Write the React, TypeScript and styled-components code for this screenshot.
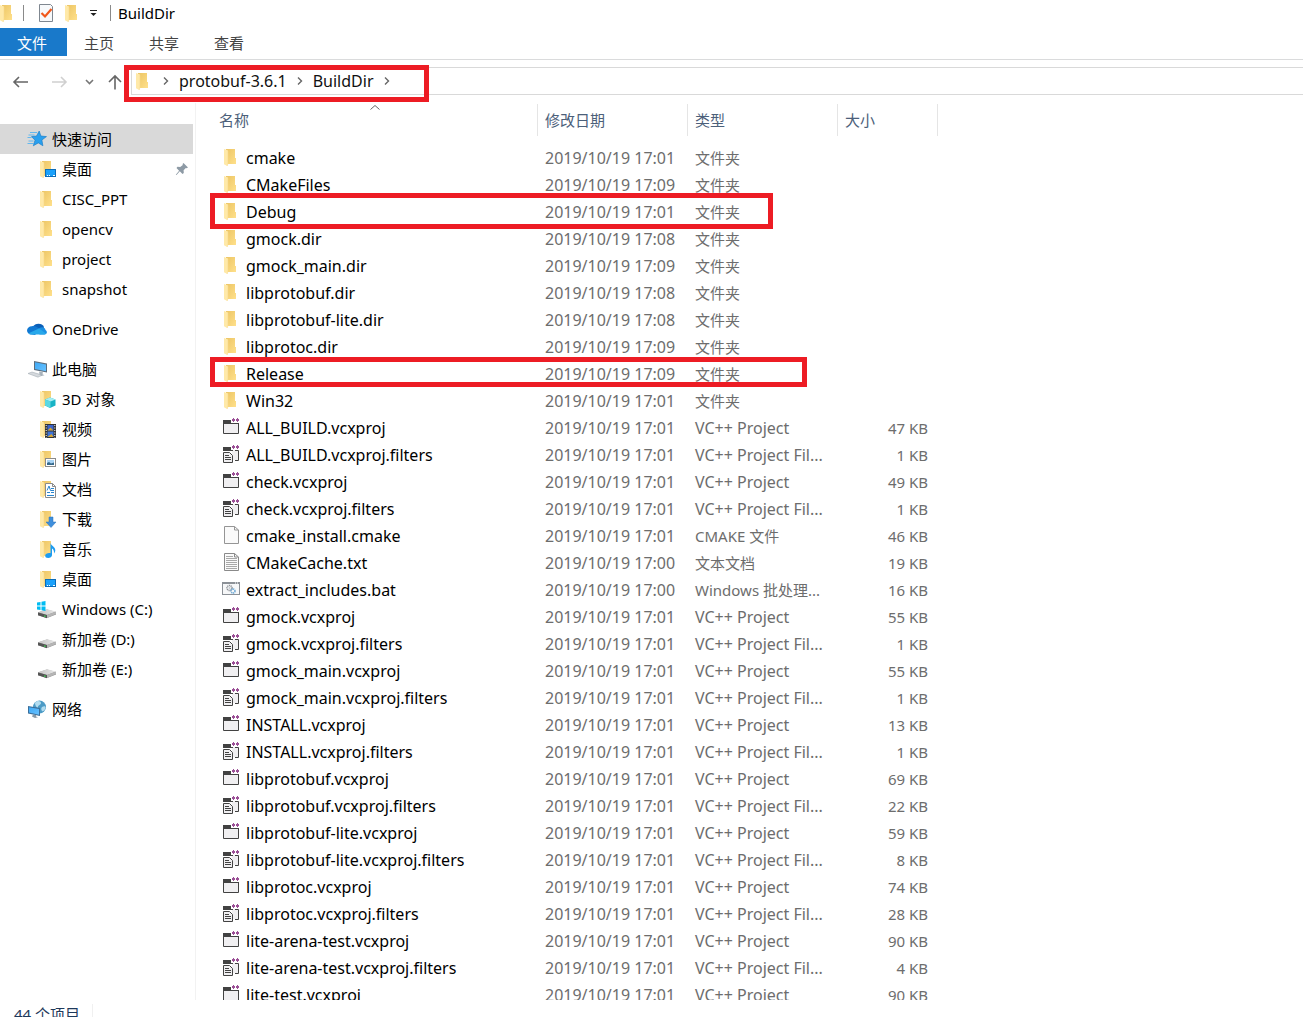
import React from "react";
import styled, { createGlobalStyle } from "styled-components";

const GlobalStyle = createGlobalStyle`
  *, *::before, *::after { box-sizing: border-box; }
  body {
    margin: 0;
    background: #fff;
    color: #000;
    font-family: "Noto Sans", "Noto Sans CJK SC", sans-serif;
    font-size: 15px;
    line-height: 20px;
  }
  button, a {
    font: inherit;
    color: inherit;
    background: none;
    border: 0;
    margin: 0;
    padding: 0;
    text-decoration: none;
    cursor: default;
  }
  svg { flex: none; }
`;

/* ---------- layout ---------- */

const Window = styled.div`
  display: flex;
  flex-direction: column;
  height: 100vh;
  overflow: hidden;
`;

const TitleBar = styled.header`
  display: flex;
  align-items: center;
  height: 28px;
  flex: none;
  padding-bottom: 2px;
`;

const QuickButton = styled.button<{ $width: number }>`
  display: flex;
  justify-content: center;
  width: ${(p) => p.$width}px;
`;

const Spacer = styled.span`
  width: 9px;
`;

const Divider = styled.span`
  width: 1px;
  height: 16px;
  background: #8a8a8a;
`;

const Title = styled.h1`
  margin: 0 0 0 7px;
  font-size: 15px;
  font-weight: 400;
`;

const Ribbon = styled.nav`
  display: flex;
  height: 32px;
  flex: none;
  border-bottom: 1px solid #dadbdc;
`;

const RibbonTab = styled.button<{ $active?: boolean }>`
  width: ${(p) => (p.$active ? 67 : 65)}px;
  height: 28px;
  padding: 2px 0 0 17px;
  text-align: left;
  color: ${(p) => (p.$active ? "#fff" : "#444")};
  background: ${(p) => (p.$active ? "#1979ca" : "transparent")};
`;

const NavBar = styled.div`
  display: flex;
  align-items: flex-start;
  height: 43px;
  flex: none;
  padding-top: 7px;
`;

const NavButtons = styled.div`
  display: flex;
  align-items: center;
  width: 131px;
  height: 30px;
  padding-left: 12px;
`;

const NavButton = styled.button<{ $gap?: number }>`
  display: flex;
  margin-right: ${(p) => p.$gap ?? 0}px;
`;

const AddressBar = styled.div`
  position: relative;
  display: flex;
  align-items: center;
  flex: 1;
  height: 28px;
  padding: 0 0 1px 1px;
  border: 1px solid #d9d9d9;
  border-right: 0;
`;

const Crumb = styled.a`
  color: #111;
  font-size: 16px;
`;

const CrumbArrow = styled.span`
  display: flex;
  justify-content: center;
  width: 26px;
`;

const Highlight = styled.span<{ $left: number; $top: number; $width: number; $height: number }>`
  position: absolute;
  z-index: 1;
  left: ${(p) => p.$left}px;
  top: ${(p) => p.$top}px;
  width: ${(p) => p.$width}px;
  height: ${(p) => p.$height}px;
  border: 5px solid #ed1c24;
  pointer-events: none;
`;

const Body = styled.div`
  display: flex;
  flex: 1;
  min-height: 0;
`;

const Sidebar = styled.aside`
  display: flex;
  flex-direction: column;
  gap: 10px;
  width: 196px;
  flex: none;
  padding: 21px 2px 0 0;
  border-right: 1px solid #f2f2f2;
  overflow: hidden;
`;

const Group = styled.ul`
  margin: 0;
  padding: 0;
  list-style: none;
`;

const SideItem = styled.a<{ $root?: boolean; $selected?: boolean }>`
  display: flex;
  align-items: center;
  gap: 5px;
  height: 30px;
  padding-left: ${(p) => (p.$root ? 27 : 37)}px;
  padding-right: 4px;
  background: ${(p) => (p.$selected ? "#d9d9d9" : "transparent")};
  white-space: nowrap;
`;

const SideLabel = styled.span`
  flex: 1;
`;

const Main = styled.main`
  flex: 1;
  min-width: 0;
  padding-left: 15px;
  overflow: hidden;
`;

const FileTable = styled.table`
  width: 727px;
  table-layout: fixed;
  border-collapse: collapse;
`;

const HeadCell = styled.th<{ $width: number }>`
  position: relative;
  width: ${(p) => p.$width}px;
  height: 41px;
  padding: 1px 0 0;
  vertical-align: top;
  font-weight: 400;
`;

const HeadButton = styled.button<{ $first?: boolean }>`
  display: block;
  width: 100%;
  height: 32px;
  padding-left: ${(p) => (p.$first ? 8 : 7)}px;
  border-right: 1px solid #e5e5e5;
  text-align: left;
  color: #4c607a;
`;

const SortMark = styled.svg`
  position: absolute;
  top: 1px;
  left: 50%;
  margin-left: -5px;
`;

const Cell = styled.td<{ $align?: string; $large?: boolean }>`
  height: 27px;
  padding: 0 10px 0 7px;
  color: #6d6d6d;
  font-size: ${(p) => (p.$large ? 16 : 15)}px;
  text-align: ${(p) => p.$align ?? "left"};
  white-space: nowrap;
`;

const NameCell = styled.td`
  position: relative;
  height: 27px;
  padding: 0 0 0 10px;
`;

const FileName = styled.a`
  display: flex;
  gap: 5px;
  height: 20px;
  font-size: 16px;
  white-space: nowrap;
`;

const FileIconSlot = styled.span`
  display: flex;
  height: 20px;
  margin-top: -1px;
`;

const StatusBar = styled.footer`
  display: flex;
  height: 17px;
  flex: none;
  padding: 4px 0 0 14px;
  color: #1e395b;
  overflow: hidden;
`;

const StatusText = styled.span`
  padding-right: 12px;
  border-right: 1px solid #f0f0f0;
`;

/* ---------- icons ---------- */

const Defs = styled.svg`
  position: absolute;
`;

const Gradients = () => (
  <Defs width="0" height="0" aria-hidden="true">
    <defs>
      <linearGradient id="folderBack" x1="0" y1="0" x2="1" y2="1">
        <stop offset="0" stopColor="#ecc564" />
        <stop offset="1" stopColor="#ffe08b" />
      </linearGradient>
      <linearGradient id="screenBlue" x1="0" y1="0" x2="1" y2="1">
        <stop offset="0" stopColor="#3fa9f5" />
        <stop offset="1" stopColor="#67c1ff" />
      </linearGradient>
      <linearGradient id="driveTop" x1="0" y1="0" x2="1" y2="0">
        <stop offset="0" stopColor="#c4c4c4" />
        <stop offset="1" stopColor="#e8e8e8" />
      </linearGradient>
    </defs>
  </Defs>
);

const FolderShape = () => (
  <>
    <path d="M5 2h9v9h1v6H5z" fill="url(#folderBack)" />
    <path d="M3 2l4 1.6v12.6L6.2 19 3 17.2z" fill="#ffe9a8" />
    <path d="M7 3.6v12.6L6.2 19" fill="none" stroke="#f6d98b" strokeWidth=".6" />
  </>
);

const Drive = () => (
  <>
    <path d="M1 13.5l9-3 9 2.5v2.6l-9 3.4-9-2.7z" fill="#8d8d8d" />
    <path d="M1 13.3l9-3 9 2.3-9 3.5z" fill="url(#driveTop)" />
    <path d="M1 13.4l9 2.7v3.1l-9-3z" fill="#555" />
    <path d="M10 16.1l9-3.5V15l-9 4z" fill="#b5b5b5" />
    <path d="M7 16.6h1.6v1.2H7z" fill="#3ddc55" />
  </>
);

const PlusPlus = () => (
  <>
    <path d="M10 0h9v5h-9z" fill="#fff" />
    <path d="M12 1h1v1h1v2h-1v1h-1V4h-1V2h1zM16 1h1v1h1v2h-1v1h-1V4h-1V2h1z" fill="#9b4f96" />
  </>
);

const icons: Record<string, React.ReactNode> = {
  folder: <FolderShape />,
  star: (
    <>
      <path d="M3 3.500h7M1.500 6h6M.5 8.500h4M1.500 12h5M.5 14.500h6" stroke="#56b4f2" strokeWidth=".9" />
      <path d="M12.200 2l1.700 5 5.600.6-4.600 3.400 1 5.800-4.600-2.900-5 2.900 1.700-5.600-3.500-3.600 5-.6z" fill="#2aa0ee" stroke="#1277c4" strokeWidth=".6" />
    </>
  ),
  desktop: (
    <>
      <FolderShape />
      <rect x="8.500" y="10.500" width="10" height="7" fill="#1ba1fb" stroke="#0b6cb8" />
      <path d="M10 16.500h1M12 16.500h1M16 16.500h2" stroke="#fff" />
    </>
  ),
  onedrive: (
    <>
      <path d="M6 8a6 5.500 0 0 1 11 0l-1 3-8 1z" fill="#0a5fb8" />
      <path d="M4.500 15.500A4.500 4 0 0 1 4.800 7.300C8 6.300 10 8 13.500 10.500L8 16z" fill="#1178d2" />
      <path d="M11 10.500c2-3 7-3 7.500.5 2 1 2 4.500-1 4.500h-5z" fill="#1a8fe3" />
      <path d="M1.500 14.200L12 9.500l7 5c-.5.8-1.200 1-2 1H4.500c-1.500 0-2.400-.4-3-1.300z" fill="#28a8ea" />
    </>
  ),
  pc: (
    <>
      <path d="M7 2l13 2.500v9L7 11z" fill="#5d6d7c" />
      <path d="M8 3.200l11 2.200v6.900L8 10.100z" fill="url(#screenBlue)" />
      <path d="M12 12.500l4 .8-.5 2 2 1-4 1-3-1.500 2-.6z" fill="#a9b4bd" />
      <path d="M1 14.500l4-1.500 10 3-4 2.200z" fill="#d5d9dd" stroke="#9aa4ad" strokeWidth=".5" />
    </>
  ),
  objects: (
    <>
      <FolderShape />
      <path d="M13 8.500l5.500 2v6L13 19l-5-2.500v-6z" fill="#18b3c5" />
      <path d="M13 8.500l5.500 2-5 2-5.500-2z" fill="#a5eef3" />
      <path d="M8 10.500l5.500 2V19L8 16.500z" fill="#5bd8e2" />
    </>
  ),
  video: (
    <>
      <FolderShape />
      <rect x="8" y="5" width="11" height="14" fill="#333" />
      <rect x="10.500" y="6" width="6" height="5.500" fill="#3b63c9" />
      <rect x="10.500" y="12.500" width="6" height="5.500" fill="#3f74d8" />
      <path d="M10.500 11.500l3-3 3 3zM10.500 18l4-3 2 3z" fill="#d7a52c" />
      <path d="M9.200 6v13M17.800 6v13" stroke="#fff" strokeDasharray="1 1.500" />
    </>
  ),
  picture: (
    <>
      <FolderShape />
      <rect x="8.500" y="9.500" width="10" height="8" fill="#fff" stroke="#8b8b8b" />
      <rect x="10" y="11" width="7" height="5" fill="#a9d4f5" />
      <path d="M10 14l2-1 2 1.500 3-1V16h-7z" fill="#376a8d" />
    </>
  ),
  document: (
    <>
      <FolderShape />
      <path d="M8.500 4.500h7l3 3v11h-10z" fill="#fff" stroke="#8b8b8b" />
      <path d="M15.500 4.500v3h3" fill="none" stroke="#8b8b8b" />
      <path d="M10 11.500l2-4.500 1.500 4.500M14 9.500h3M10 13.500h3M14 13.500h3M10 16.500h7M13.500 11.500h3.500" fill="none" stroke="#2a86cf" />
    </>
  ),
  download: (
    <>
      <FolderShape />
      <path d="M12 8h4v5h3l-5 5.500L9 13h3z" fill="#3f8fdc" stroke="#2971b8" strokeWidth=".5" />
    </>
  ),
  music: (
    <>
      <FolderShape />
      <path d="M13.500 3.500c.3 3.500 5 4 4.800 8-.2 1.500-.8 2.300-1.300 3 .3-3-1-4.500-2-5V16c0 1.800-1.800 3-3.800 3s-3-1-3-2.300c0-1.700 2.500-3 5.300-2.500z" fill="#1b9cf2" />
    </>
  ),
  windowsDrive: (
    <>
      <Drive />
      <path d="M0 3.500l3.500-.5v3.500H0zM4.500 2.800L8.500 2v4.500h-4zM0 7.500h3.500V11L0 10.500zM4.500 7.500h4V12l-4-.7z" fill="#00bcf2" />
    </>
  ),
  drive: <Drive />,
  network: (
    <>
      <circle cx="12.500" cy="8" r="6.500" fill="#4c9bc6" />
      <path d="M8 4c2-3 6-2 6 0s-3 2-3 4-3-1-3-4zM15 8c2-1 4-1 3.500 1S16 13 15 12s-1-3 0-4z" fill="#b2dcef" />
      <path d="M1 7l12 2v8L1 14.500z" fill="#3a6f9b" />
      <path d="M2 8.200l10 1.700v5.800L2 13.600z" fill="url(#screenBlue)" />
      <path d="M6 15.500l3 .6v1.400l2 .8-3 .7-3-1.500z" fill="#8999a6" />
    </>
  ),
  vcxproj: (
    <>
      <path d="M2.500 6.500h15v10h-15z" fill="#f0eff1" stroke="#424242" />
      <path d="M2 3h8v3h8v1H2z" fill="#424242" />
      <PlusPlus />
    </>
  ),
  filters: (
    <>
      <path d="M11 7v9h6V6h-6z" fill="#f0eff1" />
      <path d="M14 6.500h3.500v10H14" fill="none" stroke="#424242" />
      <path d="M2 3h8v3h2v1H2z" fill="#424242" />
      <path d="M2.500 8.500h6l3 3v7h-9z" fill="#f0eff1" stroke="#424242" />
      <path d="M4 11.500h4M4 13.500h6M4 15.500h6" stroke="#424242" />
      <PlusPlus />
    </>
  ),
  file: (
    <>
      <path d="M3.500 1.500h10l4 3.500v13.500h-14z" fill="#fafafa" stroke="#959595" />
      <path d="M13.500 1.500V5h4" fill="none" stroke="#959595" />
    </>
  ),
  text: (
    <>
      <path d="M3.500 1.500h10l4 3.500v13.500h-14z" fill="#fafafa" stroke="#8a8a8a" />
      <path d="M13.500 1.500V5h4" fill="none" stroke="#8a8a8a" />
      <path d="M5 4.500h7M5 6.500h11M5 8.500h11M5 10.500h11M5 12.500h11M5 14.500h11M5 16.500h11" stroke="#a8a8a8" />
    </>
  ),
  batch: (
    <>
      <rect x="1.500" y="3.500" width="17" height="12" fill="#f6f7f8" stroke="#8b9096" />
      <path d="M1 4h18" stroke="#8b9096" strokeWidth="2" />
      <path d="M14 4h1M16 4h1" stroke="#fff" />
      <circle cx="8.500" cy="9" r="2.500" fill="none" stroke="#8b9096" strokeWidth="1.500" strokeDasharray="1.200 .6" />
      <circle cx="8.500" cy="9" r="1" fill="#c5cad0" />
      <circle cx="12" cy="12" r="2" fill="none" stroke="#6ea8d4" strokeWidth="1.500" strokeDasharray="1.200 .5" />
    </>
  ),
  checklist: (
    <>
      <path d="M3.500 1.500h11l2 2v15h-13z" fill="#f7f9fb" stroke="#7f8790" />
      <path d="M5.500 10l3.500 3.500 6.500-7.500" fill="none" stroke="#f0581b" strokeWidth="2.200" />
    </>
  ),
};

const Icon = ({ name }: { name: string }) => (
  <svg width="20" height="20" viewBox="0 0 20 20" aria-hidden="true">
    {icons[name]}
  </svg>
);

const PinIcon = () => (
  <svg width="14" height="14" viewBox="0 0 14 14" aria-hidden="true">
    <path d="M8.500 1L13 5.500l-1.500.7-.7-.2-2.200 2.300.2 2.700-1.300 1L4.800 9.300 1.500 13 .8 12.700l3.300-4L1.500 6l1-1.300 2.700.2L7.800 3l-.2-1z" fill="#8d9aa5" />
  </svg>
);

const ChevronRight = () => (
  <svg width="8" height="10" viewBox="0 0 8 10" aria-hidden="true">
    <path d="M2 1.500L5.500 5 2 8.500" fill="none" stroke="#666" strokeWidth="1.400" />
  </svg>
);

const ArrowIcon = ({ d, color, width = 16 }: { d: string; color: string; width?: number }) => (
  <svg width={width} height="16" viewBox={`0 0 ${width} 16`} aria-hidden="true">
    <path d={d} fill="none" stroke={color} strokeWidth="1.600" />
  </svg>
);

/* ---------- data ---------- */

type SideEntry = { icon: string; label: string; root?: boolean; selected?: boolean; pinned?: boolean };

const sideGroups: SideEntry[][] = [
  [
    { icon: "star", label: "快速访问", root: true, selected: true },
    { icon: "desktop", label: "桌面", pinned: true },
    { icon: "folder", label: "CISC_PPT" },
    { icon: "folder", label: "opencv" },
    { icon: "folder", label: "project" },
    { icon: "folder", label: "snapshot" },
  ],
  [{ icon: "onedrive", label: "OneDrive", root: true }],
  [
    { icon: "pc", label: "此电脑", root: true },
    { icon: "objects", label: "3D 对象" },
    { icon: "video", label: "视频" },
    { icon: "picture", label: "图片" },
    { icon: "document", label: "文档" },
    { icon: "download", label: "下载" },
    { icon: "music", label: "音乐" },
    { icon: "desktop", label: "桌面" },
    { icon: "windowsDrive", label: "Windows (C:)" },
    { icon: "drive", label: "新加卷 (D:)" },
    { icon: "drive", label: "新加卷 (E:)" },
  ],
  [{ icon: "network", label: "网络", root: true }],
];

const kinds: Record<string, { label: string; large?: boolean }> = {
  folder: { label: "文件夹" },
  vcxproj: { label: "VC++ Project", large: true },
  filters: { label: "VC++ Project Fil...", large: true },
  file: { label: "CMAKE 文件" },
  text: { label: "文本文档" },
  batch: { label: "Windows 批处理..." },
};

type Mark = { top: number; width: number; height: number };

const files: { name: string; kind: string; time: string; size?: number; mark?: Mark }[] = [
  { name: "cmake", kind: "folder", time: "17:01" },
  { name: "CMakeFiles", kind: "folder", time: "17:09" },
  { name: "Debug", kind: "folder", time: "17:01", mark: { top: -5, width: 563, height: 36 } },
  { name: "gmock.dir", kind: "folder", time: "17:08" },
  { name: "gmock_main.dir", kind: "folder", time: "17:09" },
  { name: "libprotobuf.dir", kind: "folder", time: "17:08" },
  { name: "libprotobuf-lite.dir", kind: "folder", time: "17:08" },
  { name: "libprotoc.dir", kind: "folder", time: "17:09" },
  { name: "Release", kind: "folder", time: "17:09", mark: { top: -3, width: 597, height: 30 } },
  { name: "Win32", kind: "folder", time: "17:01" },
  { name: "ALL_BUILD.vcxproj", kind: "vcxproj", time: "17:01", size: 47 },
  { name: "ALL_BUILD.vcxproj.filters", kind: "filters", time: "17:01", size: 1 },
  { name: "check.vcxproj", kind: "vcxproj", time: "17:01", size: 49 },
  { name: "check.vcxproj.filters", kind: "filters", time: "17:01", size: 1 },
  { name: "cmake_install.cmake", kind: "file", time: "17:01", size: 46 },
  { name: "CMakeCache.txt", kind: "text", time: "17:00", size: 19 },
  { name: "extract_includes.bat", kind: "batch", time: "17:00", size: 16 },
  { name: "gmock.vcxproj", kind: "vcxproj", time: "17:01", size: 55 },
  { name: "gmock.vcxproj.filters", kind: "filters", time: "17:01", size: 1 },
  { name: "gmock_main.vcxproj", kind: "vcxproj", time: "17:01", size: 55 },
  { name: "gmock_main.vcxproj.filters", kind: "filters", time: "17:01", size: 1 },
  { name: "INSTALL.vcxproj", kind: "vcxproj", time: "17:01", size: 13 },
  { name: "INSTALL.vcxproj.filters", kind: "filters", time: "17:01", size: 1 },
  { name: "libprotobuf.vcxproj", kind: "vcxproj", time: "17:01", size: 69 },
  { name: "libprotobuf.vcxproj.filters", kind: "filters", time: "17:01", size: 22 },
  { name: "libprotobuf-lite.vcxproj", kind: "vcxproj", time: "17:01", size: 59 },
  { name: "libprotobuf-lite.vcxproj.filters", kind: "filters", time: "17:01", size: 8 },
  { name: "libprotoc.vcxproj", kind: "vcxproj", time: "17:01", size: 74 },
  { name: "libprotoc.vcxproj.filters", kind: "filters", time: "17:01", size: 28 },
  { name: "lite-arena-test.vcxproj", kind: "vcxproj", time: "17:01", size: 90 },
  { name: "lite-arena-test.vcxproj.filters", kind: "filters", time: "17:01", size: 4 },
  { name: "lite-test.vcxproj", kind: "vcxproj", time: "17:01", size: 90 },
];

/* ---------- app ---------- */

export default function App() {
  return (
    <Window>
      <GlobalStyle />
      <Gradients />
      <TitleBar>
        <QuickButton $width={14} aria-label="BuildDir">
          <Icon name="folder" />
        </QuickButton>
        <Spacer />
        <Divider />
        <QuickButton $width={44} aria-label="属性">
          <Icon name="checklist" />
        </QuickButton>
        <QuickButton $width={8} aria-label="新建文件夹">
          <Icon name="folder" />
        </QuickButton>
        <QuickButton $width={34} aria-label="自定义快速访问工具栏">
          <svg width="9" height="8" viewBox="0 0 9 8" aria-hidden="true">
            <path d="M1 1.500h7" stroke="#222" />
            <path d="M1.500 4h6l-3 3z" fill="#222" />
          </svg>
        </QuickButton>
        <Divider />
        <Title>BuildDir</Title>
      </TitleBar>

      <Ribbon>
        <RibbonTab $active>文件</RibbonTab>
        <RibbonTab>主页</RibbonTab>
        <RibbonTab>共享</RibbonTab>
        <RibbonTab>查看</RibbonTab>
      </Ribbon>

      <NavBar>
        <NavButtons>
          <NavButton $gap={24} aria-label="后退">
            <ArrowIcon color="#666" d="M1.500 8H16M7 3L2 8l5 5" />
          </NavButton>
          <NavButton $gap={17} aria-label="前进">
            <ArrowIcon color="#d0d0d0" d="M0 8h14.500M9 3l5 5-5 5" />
          </NavButton>
          <NavButton $gap={13} aria-label="最近浏览的位置">
            <ArrowIcon color="#777" d="M1 6l3.500 3.500L8 6" width={10} />
          </NavButton>
          <NavButton aria-label="上移">
            <ArrowIcon color="#666" d="M7 15.500V2M1 8l6-6 6 6" width={14} />
          </NavButton>
        </NavButtons>
        <AddressBar>
          <Icon name="folder" />
          <CrumbArrow>
            <ChevronRight />
          </CrumbArrow>
          <Crumb href="#protobuf">protobuf-3.6.1</Crumb>
          <CrumbArrow>
            <ChevronRight />
          </CrumbArrow>
          <Crumb href="#builddir">BuildDir</Crumb>
          <CrumbArrow>
            <ChevronRight />
          </CrumbArrow>
          <Highlight $left={-8} $top={-3} $width={305} $height={37} />
        </AddressBar>
      </NavBar>

      <Body>
        <Sidebar>
          {sideGroups.map((group) => (
            <Group key={group[0].label}>
              {group.map((item) => (
                <li key={item.label}>
                  <SideItem href="#" $root={item.root} $selected={item.selected}>
                    <Icon name={item.icon} />
                    <SideLabel>{item.label}</SideLabel>
                    {item.pinned && <PinIcon />}
                  </SideItem>
                </li>
              ))}
            </Group>
          ))}
        </Sidebar>

        <Main>
          <FileTable>
            <thead>
              <tr>
                <HeadCell $width={327}>
                  <HeadButton $first>名称</HeadButton>
                  <SortMark width="10" height="7" viewBox="0 0 10 7" aria-hidden="true">
                    <path d="M.5 5.500L5 1.500l4.500 4" fill="none" stroke="#666" />
                  </SortMark>
                </HeadCell>
                <HeadCell $width={150}>
                  <HeadButton>修改日期</HeadButton>
                </HeadCell>
                <HeadCell $width={150}>
                  <HeadButton>类型</HeadButton>
                </HeadCell>
                <HeadCell $width={100}>
                  <HeadButton>大小</HeadButton>
                </HeadCell>
              </tr>
            </thead>
            <tbody>
              {files.map((file) => (
                <tr key={file.name}>
                  <NameCell>
                    <FileName href="#">
                      <FileIconSlot>
                        <Icon name={file.kind} />
                      </FileIconSlot>
                      {file.name}
                    </FileName>
                    {file.mark && (
                      <Highlight
                        $left={-1}
                        $top={file.mark.top}
                        $width={file.mark.width}
                        $height={file.mark.height}
                      />
                    )}
                  </NameCell>
                  <Cell $large>2019/10/19 {file.time}</Cell>
                  <Cell $large={kinds[file.kind].large}>{kinds[file.kind].label}</Cell>
                  <Cell $align="right">{file.size ? `${file.size} KB` : ""}</Cell>
                </tr>
              ))}
            </tbody>
          </FileTable>
        </Main>
      </Body>

      <StatusBar>
        <StatusText>44 个项目</StatusText>
      </StatusBar>
    </Window>
  );
}
